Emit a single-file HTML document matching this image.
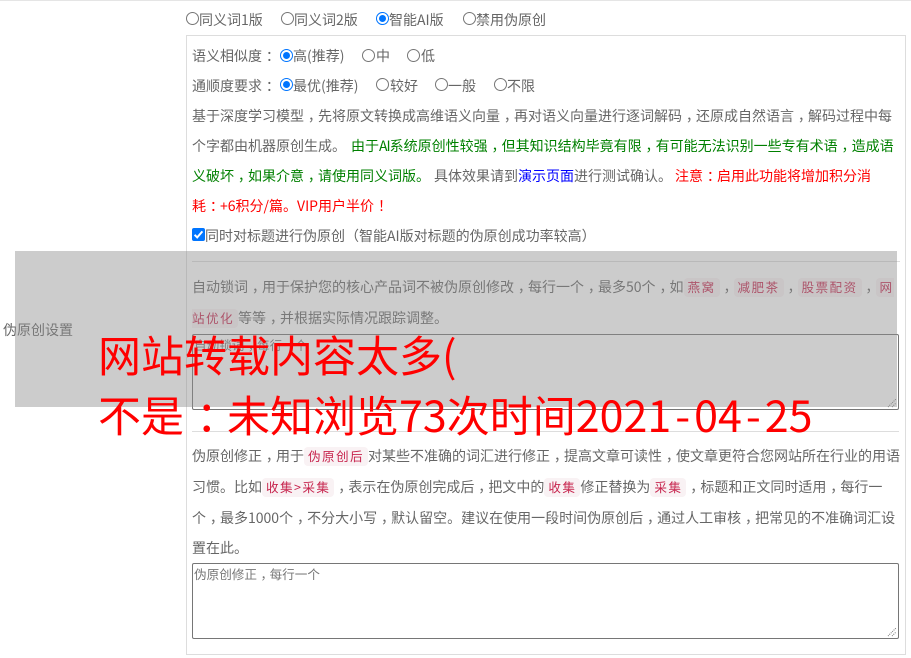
<!DOCTYPE html>
<html lang="zh-CN"><head><meta charset="utf-8"><title>伪原创设置</title>
<style>
html,body{margin:0;padding:0;background:#fff}
body{position:relative;width:911px;height:658px;overflow:hidden;font-family:"WenQuanYi Zen Hei","Noto Sans CJK SC",sans-serif;font-size:14px;color:#666}
.l{position:absolute;white-space:nowrap;line-height:20px;height:20px}
.box{position:absolute;left:186px;top:35px;width:718px;height:618px;border:1px solid #ddd}
.hr{position:absolute;left:192px;width:707px;height:1px;background:#ddd}
.g{color:#008000}.b{color:#00f}.r{color:#f00}
b{font-weight:400;position:relative;left:.28em}
code{display:inline-block;vertical-align:top;margin-top:1px;height:19px;line-height:17px;font-family:inherit;font-size:12.6px;letter-spacing:1.4px;color:#c7254e;background:#f9f2f4;border-radius:4px;padding:0 4px}
.ta{position:absolute;left:192px;width:707px;box-sizing:border-box;border:1px solid #767676;border-radius:2px;background:#fff;font-size:12.6px;color:#777;padding:1px 1px;line-height:18px}
.grip{position:absolute;right:1px;bottom:1px}
.rd{position:absolute;width:13px;height:13px;box-sizing:border-box;border:1px solid #767676;border-radius:50%;background:#fff}
.rd.on{border:1.5px solid #0075ff}
.rd.on::after{content:"";position:absolute;left:1.5px;top:1.5px;width:7px;height:7px;border-radius:50%;background:#0075ff}
.cb{position:absolute;left:192px;top:228px;width:13px;height:13px;background:#0075ff;border-radius:2px}
.ov{position:absolute;left:15px;top:251px;width:882px;height:156px;background:rgba(142,142,142,.45)}
.big{position:absolute;left:98px;white-space:nowrap;font-size:43px;line-height:57px;height:57px;color:#f00}
</style></head><body>
<div style="position:absolute;left:0;top:0;width:911px;height:1px;background:#e5e5e5"></div>
<div class="l" style="left:3px;top:320px">伪原创设置</div>

<i class="rd" style="left:186px;top:12px"></i><div class="l" style="left:199px;top:10px">同义词1版</div>
<i class="rd" style="left:281px;top:12px"></i><div class="l" style="left:294px;top:10px">同义词2版</div>
<i class="rd on" style="left:376px;top:12px"></i><div class="l" style="left:389px;top:10px">智能AI版</div>
<i class="rd" style="left:463px;top:12px"></i><div class="l" style="left:476px;top:10px">禁用伪原创</div>

<div class="box"></div>

<div class="l" style="left:192px;top:46px">语义相似度<b>：</b></div>
<i class="rd on" style="left:280px;top:49px"></i><div class="l" style="left:293px;top:46px">高(推荐)</div>
<i class="rd" style="left:362px;top:49px"></i><div class="l" style="left:376px;top:46px">中</div>
<i class="rd" style="left:407px;top:49px"></i><div class="l" style="left:421px;top:46px">低</div>

<div class="l" style="left:192px;top:76px">通顺度要求<b>：</b></div>
<i class="rd on" style="left:280px;top:78px"></i><div class="l" style="left:293px;top:76px">最优(推荐)</div>
<i class="rd" style="left:376px;top:78px"></i><div class="l" style="left:390px;top:76px">较好</div>
<i class="rd" style="left:435px;top:78px"></i><div class="l" style="left:448px;top:76px">一般</div>
<i class="rd" style="left:494px;top:78px"></i><div class="l" style="left:507px;top:76px">不限</div>

<div class="l" style="left:192px;top:106px">基于深度学习模型<b>，</b>先将原文转换成高维语义向量<b>，</b>再对语义向量进行逐词解码<b>，</b>还原成自然语言<b>，</b>解码过程中每</div>
<div class="l" style="left:192px;top:136px">个字都由机器原创生成。<span class="g" style="margin-left:5px">由于<span style="letter-spacing:-1px">AI</span>系统原创性较强<b>，</b>但其知识结构毕竟有限<b>，</b>有可能无法识别一些专有术语<b>，</b>造成语</span></div>
<div class="l" style="left:192px;top:166px"><span class="g">义破坏<b>，</b>如果介意<b>，</b>请使用同义词版。</span><span style="margin-left:4px">具体效果请到</span><span class="b">演示页面</span>进行测试确认。<span class="r" style="margin-left:3px">注意<b>：</b>启用此功能将增加积分消</span></div>
<div class="l r" style="left:192px;top:196px">耗<b>：</b>+6积分/篇。VIP用户半价<b>！</b></div>

<div class="cb"><svg width="13" height="13" viewBox="0 0 13 13" style="display:block"><path d="M2.6 6.8 5.2 9.4 10.4 3.4" fill="none" stroke="#fff" stroke-width="2"/></svg></div>
<div class="l" style="left:205px;top:226px">同时对标题进行伪原创（智能AI版对标题的伪原创成功率较高）</div>

<div class="hr" style="top:261px;width:708px"></div>
<div class="l" style="left:192px;top:277px">自动锁词<b>，</b>用于保护您的核心产品词不被伪原创修改<b>，</b>每行一个<b>，</b>最多50个<b>，</b>如<code>燕窝</code><b>，</b><code>减肥茶</code><b>，</b><code>股票配资</code><b>，</b><code style="padding-right:0;border-radius:4px 0 0 4px">网</code></div>
<div class="l" style="left:192px;top:308px"><code style="padding-left:0;border-radius:0 4px 4px 0">站优化</code>等等<b>，</b>并根据实际情况跟踪调整。</div>
<div class="ta" style="top:334px;height:76px">自动锁词<b>，</b>每行一个<svg class="grip" width="10" height="10" viewBox="0 0 10 10"><path d="M1 9 9 1M5 9 9 5" stroke="#777" stroke-width="1" stroke-dasharray="1 1" fill="none"/></svg></div>
<div class="hr" style="top:431px"></div>

<div class="l" style="left:192px;top:446px">伪原创修正<b>，</b>用于<code>伪原创后</code>对某些不准确的词汇进行修正<b>，</b>提高文章可读性<b>，</b>使文章更符合您网站所在行业的用语</div>
<div class="l" style="left:192px;top:477px">习惯。比如<code>收集&gt;采集</code><b>，</b>表示在伪原创完成后<b>，</b>把文中的<code>收集</code>修正替换为<code>采集</code><b>，</b>标题和正文同时适用<b>，</b>每行一</div>
<div class="l" style="left:192px;top:508px">个<b>，</b>最多1000个<b>，</b>不分大小写<b>，</b>默认留空。建议在使用一段时间伪原创后<b>，</b>通过人工审核<b>，</b>把常见的不准确词汇设</div>
<div class="l" style="left:192px;top:538px">置在此。</div>
<div class="ta" style="top:563px;height:76px">伪原创修正<b>，</b>每行一个<svg class="grip" width="10" height="10" viewBox="0 0 10 10"><path d="M1 9 9 1M5 9 9 5" stroke="#777" stroke-width="1" stroke-dasharray="1 1" fill="none"/></svg></div>

<div class="ov"></div>
<div class="big" style="top:326px">网站转载内容太多(</div>
<div class="big" style="top:386px">不是<b>：</b>未知浏览73次时间2021<span style="margin:0 4px">-</span>04<span style="margin:0 4px">-</span>25</div>
</body></html>
